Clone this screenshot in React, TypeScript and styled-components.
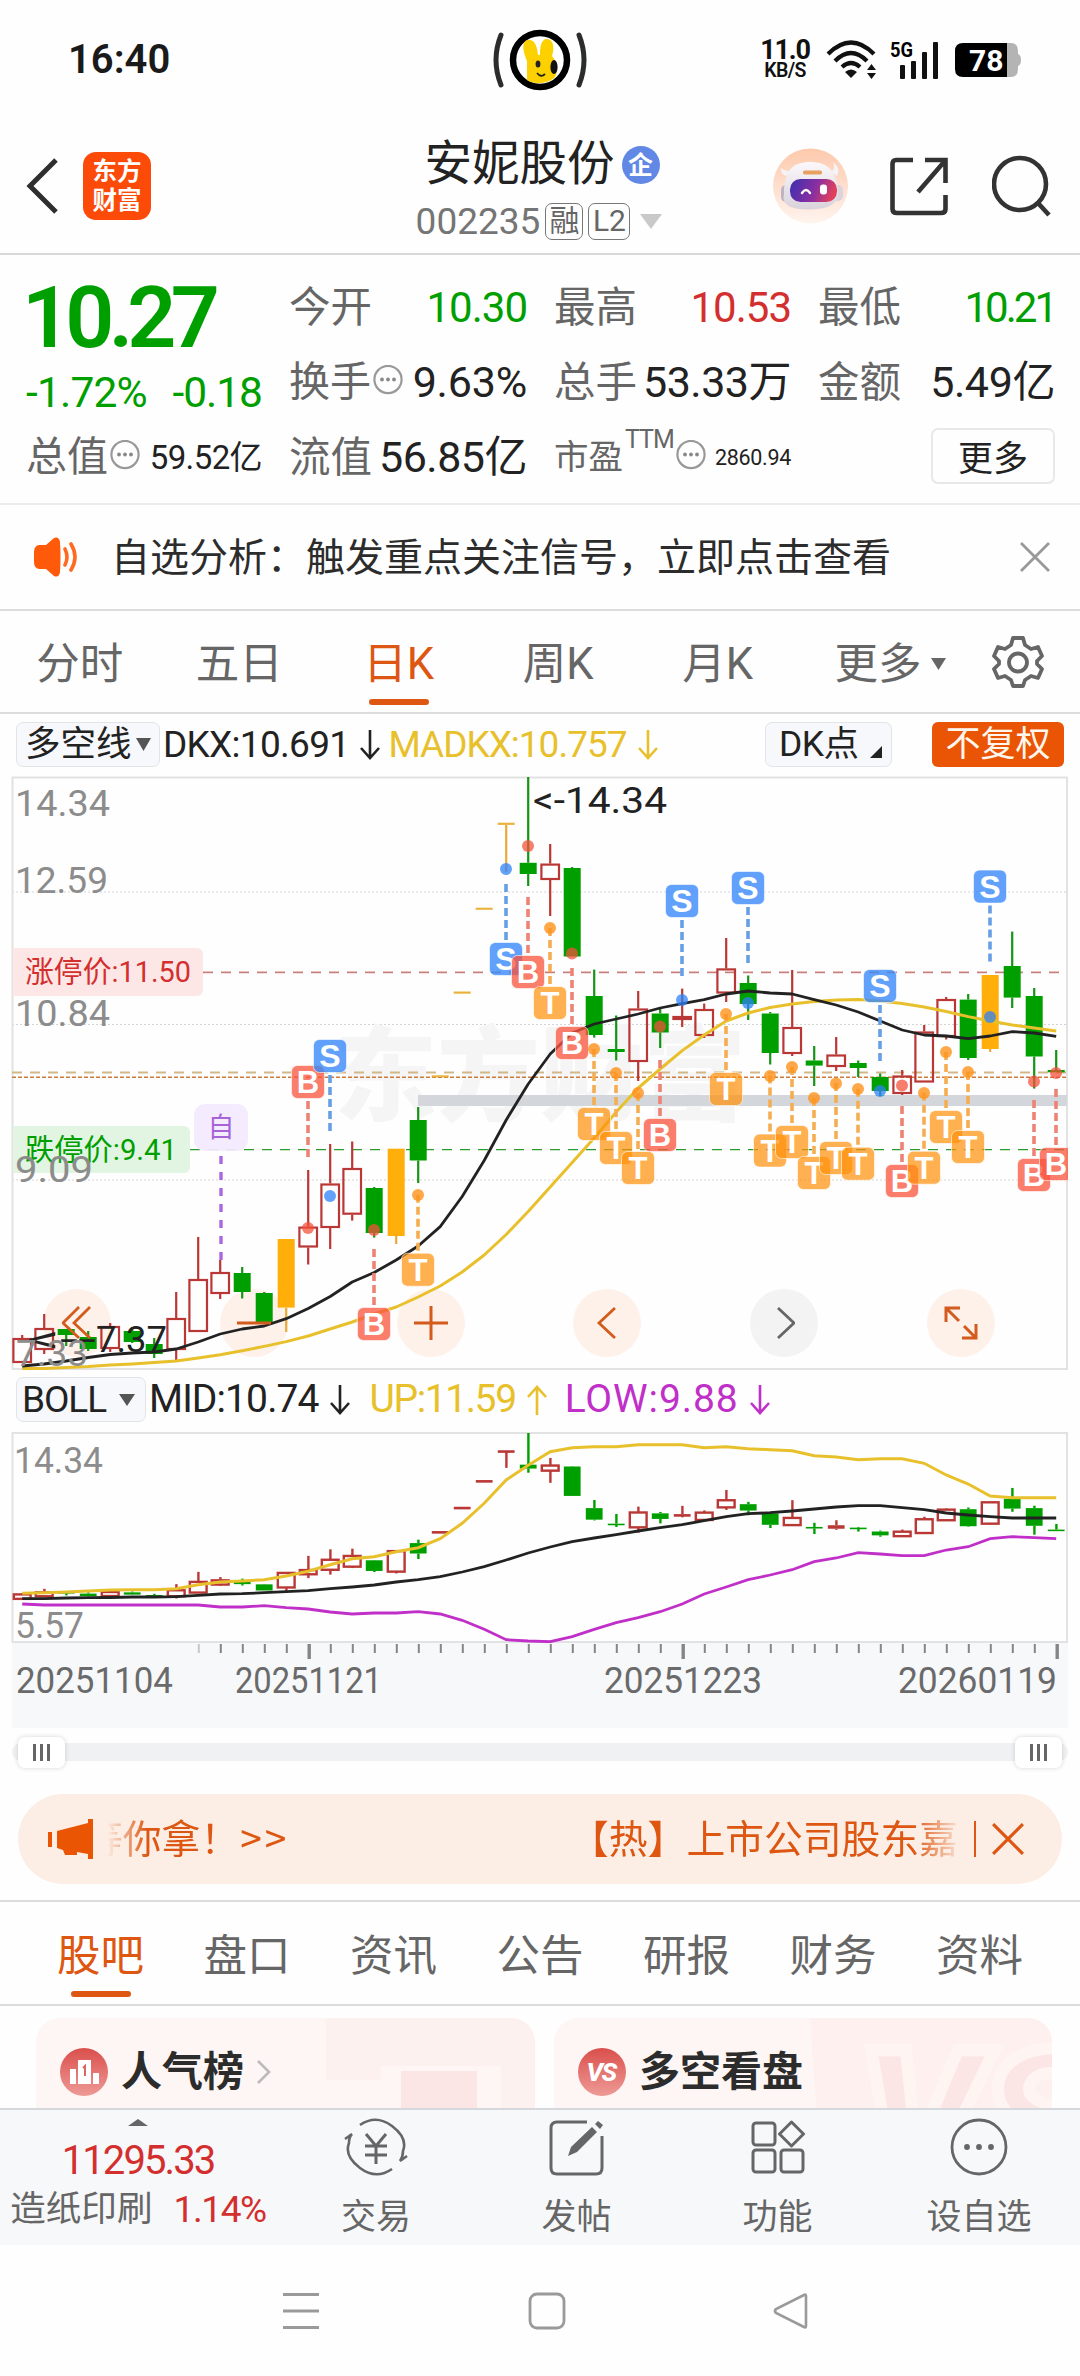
import React from "react";
import styled, { createGlobalStyle, css } from "styled-components";

const FONT = `Roboto, "Noto Sans CJK SC", "Noto Sans", sans-serif`;
const INK = "#222222";
const GREY = "#666666";
const GREEN = "#009f00";
const RED = "#d32f2f";
const ORANGE = "#dd5712";
const GOLD = "#e8c02c";
const PURPLE = "#c030c8";

const GlobalStyle = createGlobalStyle`
  html, body { margin: 0; padding: 0; background: #fefefe; }
  * { box-sizing: border-box; }
  svg { display: block; flex: none; }
`;

const Screen = styled.div`
  width: 1080px;
  height: 2376px;
  overflow: hidden;
  display: flex;
  flex-direction: column;
  background: #fefefe;
  color: ${INK};
  font-family: ${FONT};
  line-height: 1;
  white-space: nowrap;
`;

const Text = styled.span<{ $size: number; $color?: string; $ls?: number; $weight?: number; $up?: number }>`
  font-size: ${(p) => p.$size}px;
  color: ${(p) => p.$color ?? "inherit"};
  letter-spacing: ${(p) => p.$ls ?? 0}px;
  font-weight: ${(p) => p.$weight ?? 400};
  ${(p) => p.$up !== undefined && css`padding-bottom: ${p.$up}px;`}
  line-height: 1;
`;

/* ---------- status bar ---------- */
const StatusBar = styled.header`
  height: 119px;
  padding: 0 59px;
  display: grid;
  grid-template-columns: 1fr auto 1fr;
  align-items: center;
`;
const Clock = styled.span`
  padding-left: 9px;
  font-size: 40px;
  font-weight: 600;
  color: #1a1a1a;
`;
const StatusRight = styled.div`
  display: flex;
  justify-content: flex-end;
  align-items: center;
`;
const NetSpeed = styled.div`
  display: flex;
  flex-direction: column;
  align-items: center;
  width: 50px;
  margin-right: 16px;
  span {
    line-height: 0.87;
  }
`;

/* ---------- title bar ---------- */
const TitleBar = styled.nav`
  height: 136px;
  padding: 0 28px 0 26px;
  display: grid;
  grid-template-columns: 1fr auto 1fr;
  border-bottom: 2px solid #d9d9d9;
`;
const NavSide = styled.div<{ $end?: boolean }>`
  display: flex;
  align-items: center;
  justify-content: ${(p) => (p.$end ? "flex-end" : "flex-start")};
`;
const BrandLogo = styled.div`
  width: 68px;
  height: 68px;
  margin-left: 25px;
  border-radius: 13px;
  background: #fc4a08;
  color: #fff;
  font-size: 24.5px;
  line-height: 29px;
  font-weight: 700;
  display: flex;
  flex-direction: column;
  align-items: center;
  justify-content: center;
`;
const TitleBlock = styled.div`
  display: flex;
  flex-direction: column;
  align-items: center;
  padding-top: 22px;
`;
const TitleLine = styled.div`
  display: flex;
  align-items: center;
  gap: 7px;
  height: 48px;
  padding-left: 6px;
`;
const CodeLine = styled.div`
  display: flex;
  align-items: center;
  height: 36px;
  margin-top: 14px;
`;
const EntBadge = styled.span`
  width: 38px;
  height: 38px;
  border-radius: 50%;
  background: #6288e6;
  color: #fff;
  font-size: 25px;
  font-weight: 700;
  display: flex;
  align-items: center;
  justify-content: center;
`;
const TagBox = styled.span<{ $w: number }>`
  width: ${(p) => p.$w}px;
  height: 37px;
  margin-left: 5px;
  border: 1.5px solid #777;
  border-radius: 7px;
  color: ${GREY};
  font-size: 30px;
  display: flex;
  align-items: center;
  justify-content: center;
`;

/* ---------- quote ---------- */
const Quote = styled.section`
  height: 250px;
  padding: 0 25px 0 26px;
  display: grid;
  grid-template-columns: 236px 238px 237px 237px;
  column-gap: 27px;
  border-bottom: 2px solid #ebebeb;
`;
const PriceColumn = styled.div`
  display: grid;
  grid-template-rows: 126px 25px 103px;
  align-items: center;
`;
const LastPrice = styled.span`
  margin-left: -4px;
  font-size: 86px;
  font-weight: 600;
  letter-spacing: -5.8px;
  color: ${GREEN};
`;
const StatColumn = styled.div`
  display: grid;
  grid-template-rows: 75px 75px 75px;
  padding-top: 15px;
  align-items: center;
`;
const Stat = styled.div`
  display: flex;
  align-items: center;
  justify-content: space-between;
`;
const StatLabel = styled.div`
  display: flex;
  align-items: center;
  gap: 2px;
`;
const MoreButton = styled.button`
  justify-self: end;
  width: 124px;
  height: 56px;
  margin-top: -4px;
  border: 2px solid #e6e8e9;
  border-radius: 7px;
  background: #fefefe;
  font-family: inherit;
  font-size: 35px;
  color: ${INK};
  padding: 0 0 6px;
`;

/* ---------- alert ---------- */
const AlertBar = styled.section`
  height: 106px;
  padding: 0 30px 0 33px;
  display: flex;
  align-items: center;
  border-bottom: 2px solid #dcdcdc;
`;
const AlertText = styled.p`
  margin: 0 auto 0 30px;
  padding-bottom: 5px;
  font-size: 39px;
  color: #2c2c2c;
  font-family: "Noto Sans CJK SC", sans-serif;
`;

/* ---------- tabs ---------- */
const PeriodTabs = styled.nav`
  height: 103px;
  display: grid;
  grid-template-columns: repeat(5, 159.5px) 185px 1fr;
  align-items: center;
  border-bottom: 2px solid #dcdcdc;
`;
const Tab = styled.div<{ $active?: boolean }>`
  height: 100%;
  display: flex;
  flex-direction: column;
  align-items: center;
  justify-content: flex-end;
  font-size: 43.5px;
  color: ${(p) => (p.$active ? ORANGE : GREY)};
  gap: 13px;
  padding-bottom: 7px;
  &::after {
    content: "";
    width: 60px;
    height: 6px;
    border-radius: 3px;
    background: ${(p) => (p.$active ? ORANGE : "transparent")};
  }
`;
const TabLabel = styled.span`
  display: flex;
  align-items: center;
  gap: 9px;
`;
const GearCell = styled.div`
  padding-left: 9px;
`;

/* ---------- indicator rows ---------- */
const IndicatorRow = styled.div<{ $h: number }>`
  height: ${(p) => p.$h}px;
  padding: 0 16px 2px;
  display: flex;
  align-items: center;
`;
const Picker = styled.div<{ $w: number; $gap: number; $pl: number }>`
  width: ${(p) => p.$w}px;
  height: 45px;
  padding-left: ${(p) => p.$pl}px;
  display: flex;
  align-items: center;
  gap: ${(p) => p.$gap}px;
  border: 1.5px solid #e3e4e8;
  border-radius: 7px;
  background: #f7f8fb;
  color: ${INK};
`;
const Reading = styled.span<{ $color: string; $ml: number; $ls?: number; $size?: number }>`
  display: flex;
  align-items: center;
  gap: 11px;
  margin-left: ${(p) => p.$ml}px;
  color: ${(p) => p.$color};
  font-size: ${(p) => p.$size ?? 37}px;
  letter-spacing: ${(p) => p.$ls ?? 0}px;
`;
const RightTools = styled.div`
  display: flex;
  margin-left: auto;
`;
const AdjustButton = styled.div`
  width: 132px;
  height: 45px;
  margin-left: 40px;
  border-radius: 6px;
  background: #e95504;
  color: #fff6ee;
  font-size: 35px;
  display: flex;
  align-items: center;
  justify-content: center;
`;

/* ---------- chart ---------- */
const ChartArea = styled.section`
  position: relative;
  height: 592px;
`;
const ChartCanvas = styled.svg`
  position: relative;
  z-index: 1;
  overflow: visible;
`;
const ChartControls = styled.div`
  position: absolute;
  left: 43px;
  top: 512px;
  display: flex;
  gap: 108.8px;
`;
/* The disc sits below the candles, its glyph above them. */
const RoundButton = styled.div<{ $muted?: boolean }>`
  position: relative;
  width: 68px;
  height: 68px;
  display: flex;
  align-items: center;
  justify-content: center;
  color: ${(p) => (p.$muted ? "#666" : "#d35b1c")};
  &::before {
    content: "";
    position: absolute;
    inset: 0;
    z-index: 0;
    border-radius: 50%;
    background: ${(p) => (p.$muted ? "#f3f3f3" : "#fef1ea")};
  }
  svg {
    position: relative;
    z-index: 2;
  }
`;

/* ---------- range slider ---------- */
const SliderRow = styled.div`
  height: 66px;
  padding: 0 12px;
  display: flex;
  align-items: center;
  margin-top: -9px;
`;
const Track = styled.div`
  width: 1056px;
  height: 18px;
  padding: 0 6px;
  border-radius: 9px;
  background: #f0f1f3;
  display: flex;
  align-items: center;
  justify-content: space-between;
`;
const Handle = styled.div`
  width: 47px;
  height: 31px;
  border-radius: 7px;
  background: #fff;
  box-shadow: 0 0 5px rgba(0, 0, 0, 0.16);
  display: flex;
  align-items: center;
  justify-content: center;
  gap: 4.5px;
  i {
    width: 2.5px;
    height: 17px;
    background: #666;
  }
`;

/* ---------- banner ---------- */
const Banner = styled.div`
  height: 90px;
  margin: 9px 18px 0;
  padding: 0 0 0 30px;
  border-radius: 45px;
  background: #fceee5;
  display: flex;
  align-items: center;
  color: ${ORANGE};
`;
const Marquee = styled.div`
  width: 850px;
  margin-left: 13px;
  overflow: hidden;
  display: flex;
  font-family: "Noto Sans CJK SC", sans-serif;
  font-size: 38.8px;
  line-height: 50px;
  padding-bottom: 6px;
  mask-image: linear-gradient(90deg, transparent 0, #000 40px, #000 806px, transparent 856px);
`;
const MarqueeOld = styled.span`
  margin-left: -23px;
`;
const MarqueeArrows = styled.span`
  margin-left: 1px;
  letter-spacing: 3px;
`;
const MarqueeNew = styled.span`
  margin-left: auto;
  margin-right: -1px;
`;
const Divider = styled.i`
  width: 2px;
  height: 36px;
  margin: 0 16px 0 17px;
  background: ${ORANGE};
`;

/* ---------- content tabs and cards ---------- */
const ContentTabs = styled.nav`
  height: 106px;
  margin-top: 16px;
  padding: 0 57px;
  display: flex;
  justify-content: space-between;
  border-top: 2px solid #dcdcdc;
  border-bottom: 2px solid #dcdcdc;
`;
const Cards = styled.section`
  height: 102px;
  padding: 12px 28px 0 36px;
  display: grid;
  grid-template-columns: 499px 498px;
  column-gap: 19px;
  overflow: hidden;
`;
const Card = styled.div`
  position: relative;
  height: 140px;
  border-radius: 24px;
  overflow: hidden;
  background: #fef6f4;
`;
const CardArt = styled.svg`
  position: absolute;
  inset: 0;
`;
const CardTitle = styled.div`
  position: relative;
  display: flex;
  align-items: center;
  height: 108px;
  padding-left: 24px;
  gap: 13px;
`;

/* ---------- bottom bars ---------- */
const ActionBar = styled.footer`
  height: 137px;
  border-top: 2px solid #d5d9dd;
  background: #f7f8fa;
  display: grid;
  grid-template-columns: 276px 200px 201px 201px 202px;
`;
const IndexCell = styled.div`
  display: flex;
  flex-direction: column;
  align-items: center;
  padding-top: 9px;
`;
const IndexValue = styled.span`
  margin-top: 15px;
  font-size: 40px;
  letter-spacing: -1.9px;
  color: ${RED};
`;
const IndexRow = styled.div`
  display: flex;
  align-items: center;
  gap: 21px;
  margin-top: 10px;
`;
const Action = styled.div`
  display: flex;
  flex-direction: column;
  align-items: center;
  padding-top: 8px;
  gap: 24px;
  font-size: 35px;
  color: ${GREY};
`;
const SystemNav = styled.div`
  height: 131px;
  padding: 0 270px 0 280px;
  display: flex;
  align-items: center;
  justify-content: space-between;
`;

/* ---------- data: [kind, bodyTop, bodyBottom, high, low] on the main pane ---------- */
type Kind = "r" | "g" | "y";
type Candle = [Kind, number, number, number, number];
const candles: Candle[] = [
  ["r", 1338, 1363, 1335, 1363], ["r", 1328, 1350, 1314, 1354], ["g", 1329, 1335, 1329, 1346],
  ["g", 1337, 1349, 1331, 1351], ["r", 1326, 1349, 1323, 1352], ["g", 1331, 1342, 1327, 1343],
  ["g", 1344, 1354, 1338, 1358], ["r", 1318, 1350, 1292, 1361], ["r", 1279, 1332, 1237, 1332],
  ["r", 1272, 1294, 1260, 1299], ["g", 1273, 1292, 1267, 1298.5], ["g", 1293, 1322, 1292, 1322],
  ["y", 1239, 1307.6, 1239, 1332], ["r", 1226.6, 1247.5, 1170, 1264.5], ["r", 1183.5, 1228, 1144, 1249],
  ["r", 1168, 1214.7, 1141.5, 1220.6], ["g", 1188, 1233, 1187, 1237.6], ["y", 1148.7, 1236, 1148.7, 1244],
  ["g", 1120, 1160.5, 1107, 1183], ["y", 1075.3, 1077.3, 1076, 1076], ["y", 991.5, 993.7, 992, 992],
  ["y", 907.7, 909.8, 909, 909], ["y", 822.7, 824.9, 823, 872], ["g", 862.8, 874, 777, 886],
  ["r", 863.6, 880, 844, 916], ["g", 868, 956.5, 867, 956], ["g", 996, 1035, 969.6, 1037.6],
  ["g", 1049, 1052, 1015.5, 1060.5], ["r", 1008.5, 1062, 991, 1081], ["g", 1013.5, 1032.5, 1008.7, 1048],
  ["r", 1016, 1020, 988.6, 1027], ["r", 1009, 1036, 1003.6, 1038], ["r", 968.4, 993.5, 938, 1002],
  ["g", 983, 1004, 975.5, 1020], ["g", 1013.5, 1053, 1012, 1064.5], ["r", 1027, 1054, 970, 1056],
  ["g", 1060.5, 1065.6, 1046, 1086], ["r", 1054.5, 1067, 1037, 1071], ["g", 1063, 1068, 1060.5, 1077],
  ["g", 1077, 1091, 1073.5, 1096], ["r", 1075.5, 1094, 1070, 1095], ["r", 1031.5, 1082.5, 1025, 1082],
  ["r", 999, 1037, 997, 1039.5], ["g", 999.6, 1058, 994, 1060], ["y", 975, 1049, 975, 1052],
  ["g", 966, 997.6, 931.6, 1008], ["g", 996, 1056.5, 988, 1088.6], ["g", 1070, 1072.3, 1050, 1072],
];
const X = (i: number) => 22.2 + i * 22;

const dkx = [1366, 1364, 1361, 1357.5, 1354.5, 1353, 1352, 1349, 1342, 1334, 1329, 1326, 1318.7, 1308.5, 1296.5, 1282, 1272.5, 1260,
  1246, 1226.6, 1196.5, 1160.5, 1120, 1084, 1054, 1033, 1024, 1019, 1014, 1008, 1003.6, 999.6, 994, 991, 993, 994, 999.6, 1005,
  1012, 1021, 1030, 1035, 1036, 1038.7, 1036, 1031.6, 1033, 1036.4];
const madkx = [1368.5, 1368.5, 1367.5, 1366.5, 1365, 1364, 1362.6, 1361, 1358, 1354.7, 1350.7, 1346.4, 1341.6, 1336, 1329, 1322, 1314, 1307,
  1297, 1286, 1272, 1255, 1234.5, 1211.5, 1187, 1162.5, 1138, 1112, 1088, 1069, 1050.6, 1035, 1021, 1013, 1007.5, 1004, 1001.6, 1000,
  999.6, 1001, 1003.6, 1007, 1011.5, 1016.6, 1021, 1025, 1028, 1031];
const up = [1593.3, 1592.7, 1592, 1591, 1590, 1589.7, 1589.7, 1588.7, 1584.7, 1582, 1581, 1579.7, 1576, 1571.3, 1564.7, 1558.7, 1556.7, 1551.7,
  1547.7, 1538.7, 1523.3, 1503.3, 1480, 1465.3, 1451.7, 1447.7, 1446.7, 1446.7, 1444.7, 1444.7, 1444.7, 1447.7, 1446.7, 1448.7, 1449.7, 1450.7,
  1455.7, 1457, 1459.7, 1458.7, 1458.7, 1463.3, 1475, 1484, 1496, 1497.7, 1497.7, 1497.7];
const mid = [1598.7, 1598.7, 1598, 1597.7, 1597.5, 1597, 1597, 1596.7, 1595.3, 1594, 1593.7, 1592.7, 1591.7, 1590.7, 1588.7, 1587, 1585, 1582,
  1579.7, 1576.7, 1572, 1566.7, 1560, 1553, 1547, 1541.7, 1538, 1534.7, 1531, 1527.7, 1524.7, 1520.7, 1516.7, 1513.7, 1512.7, 1511, 1509, 1507,
  1505.7, 1505.7, 1507.7, 1509.7, 1513, 1515, 1516.7, 1518, 1518, 1518];
const low = [1604, 1605, 1605, 1605, 1605, 1605, 1605, 1605, 1605, 1607, 1607, 1605.7, 1607.7, 1609, 1612, 1614, 1613, 1613, 1611.7, 1614,
  1620.3, 1629.3, 1639.7, 1641, 1641.7, 1636.7, 1629.3, 1622.7, 1617.7, 1611.7, 1604, 1594, 1587, 1579.7, 1575, 1569.7, 1561.7, 1558,
  1552.7, 1554, 1555.7, 1555.7, 1550, 1546.7, 1538.7, 1536.7, 1537.7, 1538.7];

const line = (ys: number[]) => ys.map((y, i) => `${X(i).toFixed(1)},${y}`).join(" ");

/* The main pane is logarithmic, the BOLL pane linear. */
const toBoll = (y: number) => {
  const price = 14.34 * Math.exp((-(y - 777) / 592) * 0.6711);
  return 1433 + ((14.34 - price) / 8.77) * 209;
};

type Mark = { i: number; t: "B" | "S" | "T"; y: number; dot: number; dir: 1 | -1 };
const marks: Mark[] = [
  { i: 13, t: "B", y: 1082, dot: 1228, dir: 1 }, { i: 14, t: "S", y: 1056, dot: 1196, dir: 1 },
  { i: 16, t: "B", y: 1324, dot: 1230, dir: -1 }, { i: 18, t: "T", y: 1269.7, dot: 1195, dir: -1 },
  { i: 22, t: "S", y: 959, dot: 869, dir: -1 }, { i: 23, t: "B", y: 972, dot: 846, dir: -1 },
  { i: 24, t: "T", y: 1003, dot: 928, dir: -1 }, { i: 25, t: "B", y: 1043, dot: 953.5, dir: -1 },
  { i: 26, t: "T", y: 1124, dot: 1049, dir: -1 }, { i: 27, t: "T", y: 1148, dot: 1073, dir: -1 },
  { i: 28, t: "T", y: 1168, dot: 1093, dir: -1 }, { i: 29, t: "B", y: 1135, dot: 1026.5, dir: -1 },
  { i: 30, t: "S", y: 901, dot: 1000, dir: 1 }, { i: 32, t: "T", y: 1089, dot: 1014, dir: -1 },
  { i: 33, t: "S", y: 888, dot: 1003, dir: 1 }, { i: 34, t: "T", y: 1150.6, dot: 1076, dir: -1 },
  { i: 35, t: "T", y: 1142, dot: 1067, dir: -1 }, { i: 36, t: "T", y: 1173, dot: 1098, dir: -1 },
  { i: 37, t: "T", y: 1158, dot: 1083.5, dir: -1 }, { i: 38, t: "T", y: 1163.7, dot: 1089, dir: -1 },
  { i: 39, t: "S", y: 986, dot: 1091, dir: 1 }, { i: 40, t: "B", y: 1181, dot: 1085.5, dir: -1 },
  { i: 41, t: "T", y: 1167.7, dot: 1093, dir: -1 }, { i: 42, t: "T", y: 1127, dot: 1052, dir: -1 },
  { i: 43, t: "T", y: 1147, dot: 1072, dir: -1 }, { i: 44, t: "S", y: 886.6, dot: 1017, dir: 1 },
  { i: 46, t: "B", y: 1175, dot: 1081.5, dir: -1 }, { i: 47, t: "B", y: 1164, dot: 1073, dir: -1 },
];
const boxFill = { B: "rgba(250,84,62,.76)", S: "rgba(58,137,250,.8)", T: "rgba(255,146,12,.72)" };
const dotFill = { B: "rgba(244,80,58,.74)", S: "rgba(44,130,250,.74)", T: "rgba(255,146,28,.8)" };
const stemFill = { B: "#ee8274", S: "#679fe6", T: "#f5ad52" };

const MainCandle = ({ c, i }: { c: Candle; i: number }) => {
  const [k, t, b, h, l] = c;
  const x = X(i);
  const color = k === "r" ? "#b93836" : k === "g" ? GREEN : "#ffae0a";
  const wick = k === "y" ? "#e9a93a" : k === "g" ? "#159415" : color;
  return (
    <g>
      {h < t && <rect x={x - 1.1} y={h} width={2.2} height={t - h} fill={wick} />}
      {l > b && <rect x={x - 1.1} y={b} width={2.2} height={l - b} fill={wick} />}
      {k === "r" ? (
        <rect x={x - 8.8} y={t + 1} width={17.6} height={b - t - 2} fill="none" stroke={color} strokeWidth={2.2} />
      ) : (
        <rect x={x - 8.5} y={t} width={17} height={b - t} fill={b - t < 3 && k === "y" ? "#e9b23c" : color} />
      )}
    </g>
  );
};

const BollCandle = ({ c, i }: { c: Candle; i: number }) => {
  const [t, b, h, l] = c.slice(1).map((v) => toBoll(v as number));
  const x = X(i);
  const green = c[0] === "g";
  const color = green ? GREEN : "#b93836";
  const hollow = !green && b - t > 4;
  const bh = Math.max(b - t, green ? 1.6 : 2.6);
  return (
    <g>
      <rect x={x - 1} y={h} width={2.4} height={Math.max(t - h, 0)} fill={color} />
      <rect x={x - 1} y={b} width={2.4} height={Math.max(l - b, 0)} fill={color} />
      {hollow ? (
        <rect x={x - 8.4} y={t + 0.6} width={16.8} height={b - t - 0.6} fill="none" stroke={color} strokeWidth={2.4} />
      ) : (
        <rect x={x - 8.4} y={t} width={16.8} height={bh} fill={color} />
      )}
    </g>
  );
};

const Marker = ({ m }: { m: Mark }) => {
  const x = X(m.i) - 0.2;
  const near = m.y + m.dir * 19;
  const far = m.y + m.dir * 75;
  return (
    <g>
      <line x1={x} x2={x} y1={Math.min(near, far)} y2={Math.max(near, far)} stroke={stemFill[m.t]} strokeWidth={3.6} strokeDasharray="8 4" />
      <circle cx={x} cy={m.dot} r={6} fill={dotFill[m.t]} />
      <rect x={x - 16.5} y={m.y - 16.5} width={33} height={33} rx={6} fill={boxFill[m.t]} stroke="rgba(255,255,255,.6)" strokeWidth={1} />
      <text x={x} y={m.y + 11.3} textAnchor="middle" fontFamily="Liberation Sans, sans-serif" fontWeight={700} fontSize={m.t === "S" ? 32 : 31} fill="#fff">
        {m.t}
      </text>
    </g>
  );
};

const AxisText = ({ x, y, w, c = "#8c8c8c", s = 37.5, children }: { x: number; y: number; w: number; c?: string; s?: number; children: string }) => (
  <text x={x} y={y} fontSize={s} fill={c} textLength={w} lengthAdjust="spacingAndGlyphs" fontFamily="Roboto, sans-serif">
    {children}
  </text>
);

const MainChart = () => (
  <ChartCanvas width={1080} height={592} viewBox="0 777 1080 592" fontFamily={FONT}>
    {[892, 1024.5, 1180].map((y) => (
      <line key={y} x1={12} x2={1067} y1={y} y2={y} stroke="#d4d4d4" strokeWidth={1} strokeDasharray="2 2" />
    ))}
    <text x={334} y={1113} fontSize={103} fontWeight={900} fill="#f5f5f5" fontFamily="Noto Sans CJK SC, sans-serif">东方财富</text>
    <rect x={12.5} y={777.5} width={1054.5} height={591.5} fill="none" stroke="#e2e2e2" strokeWidth={2} />
    <rect x={418} y={1095} width={649} height={11} fill="#d3d7dc" />
    <line x1={203} x2={1067} y1={972.4} y2={972.4} stroke="#c9807c" strokeWidth={1.8} strokeDasharray="10 8" />
    <line x1={12} x2={1067} y1={1072.5} y2={1072.5} stroke="#d2b888" strokeWidth={1.8} strokeDasharray="10 8" />
    <line x1={12} x2={1067} y1={1077.3} y2={1077.3} stroke="#cc7a3c" strokeWidth={1.4} strokeDasharray="4 2" />
    <line x1={190} x2={1067} y1={1149.6} y2={1149.6} stroke="#2f9a2f" strokeWidth={1.4} strokeDasharray="10 8" />
    <path d="M13 948h184a6 6 0 0 1 6 6v36a6 6 0 0 1-6 6H13z" fill="#fde7e6" />
    <path d="M13 1126h171a6 6 0 0 1 6 6v35a6 6 0 0 1-6 6H13z" fill="#e2f4e2" />
    <text x={25} y={982} fontSize={30} fill={RED} textLength={166} lengthAdjust="spacingAndGlyphs">涨停价:11.50</text>
    <text x={25} y={1160} fontSize={30} fill={GREEN} textLength={152} lengthAdjust="spacingAndGlyphs">跌停价:9.41</text>
    {candles.map((c, i) => <MainCandle key={i} c={c} i={i} />)}
    <polyline points={line(madkx)} fill="none" stroke={GOLD} strokeWidth={3} strokeLinejoin="round" />
    <polyline points={line(dkx)} fill="none" stroke={INK} strokeWidth={2.8} strokeLinejoin="round" />
    <line x1={221} x2={221} y1={1156} y2={1261} stroke="#ab68dd" strokeWidth={3.4} strokeDasharray="8 8" />
    <rect x={194} y={1104} width={54} height={47} rx={11} fill="rgba(243,234,254,.92)" />
    <text x={221} y={1137} textAnchor="middle" fontSize={27} fill="#a764d8">自</text>
    <AxisText x={15} y={816} w={95}>14.34</AxisText>
    <AxisText x={15} y={892.5} w={93}>12.59</AxisText>
    <AxisText x={15} y={1025.5} w={95}>10.84</AxisText>
    <AxisText x={15} y={1181.5} w={78}>9.09</AxisText>
    <clipPath id="pane"><rect x={12} y={777} width={1056} height={592} /></clipPath>
    <g clipPath="url(#pane)">{marks.map((m) => <Marker key={m.i} m={m} />)}</g>
    <AxisText x={533} y={813} w={134} c={INK}>{"<-14.34"}</AxisText>
    <AxisText x={27} y={1352} w={69} c={INK}>{"<--"}</AxisText>
    <AxisText x={96} y={1352} w={71} c={INK}>7.37</AxisText>
    <AxisText x={16} y={1366} w={72}>7.33</AxisText>
  </ChartCanvas>
);

const BollChart = () => (
  <svg width={1080} height={296} viewBox="0 1432 1080 296">
    <rect x={12} y={1643} width={1056} height={85} fill="#f7f8fa" />
    <rect x={12.5} y={1433} width={1054.5} height={209} fill="none" stroke="#e2e2e2" strokeWidth={2} />
    <AxisText x={14} y={1473} w={89} s={37}>14.34</AxisText>
    <AxisText x={15} y={1638} w={69} s={37}>5.57</AxisText>
    <clipPath id="boll"><rect x={12} y={1433} width={1056} height={210} /></clipPath>
    <g clipPath="url(#boll)">
      {candles.map((c, i) => <BollCandle key={i} c={c} i={i} />)}
      <polyline points={line(mid)} fill="none" stroke={INK} strokeWidth={2.8} />
      <polyline points={line(up)} fill="none" stroke={GOLD} strokeWidth={3} />
      <polyline points={line(low)} fill="none" stroke={PURPLE} strokeWidth={2.8} />
    </g>
    {candles.map((_, i) => {
      if (i < 8) return null;
      const big = i === 13 || i === 30 || i === 47;
      return <rect key={i} x={X(i) - (big ? 0.7 : 0.4)} y={1644} width={big ? 3.4 : 2} height={big ? 15 : 9} fill={i === 8 ? "#c8c8c8" : "#858585"} />;
    })}
    <AxisText x={16} y={1692.5} w={157} c="#6a6a6a">20251104</AxisText>
    <AxisText x={235} y={1692.5} w={147} c="#6a6a6a">20251121</AxisText>
    <AxisText x={604} y={1692.5} w={158} c="#6a6a6a">20251223</AxisText>
    <AxisText x={898} y={1692.5} w={159} c="#6a6a6a">20260119</AxisText>
  </svg>
);

/* ---------- small drawings ---------- */
const Caret = ({ w, h, c, up: flip }: { w: number; h: number; c: string; up?: boolean }) => (
  <svg width={w} height={h} viewBox="0 0 10 10" preserveAspectRatio="none"><path d={flip ? "M0 10L5 0l5 10z" : "M0 0h10L5 10z"} fill={c} /></svg>
);
const Arrow = ({ up: flip }: { up?: boolean }) => (
  <svg width={20} height={32} viewBox="0 0 20 32" fill="none" stroke="currentColor" strokeWidth={2.6}>
    <path d={flip ? "M10 31V3M1 13l9-10 9 10" : "M10 1v28M1 19l9 10 9-10"} />
  </svg>
);
const InfoDots = () => (
  <svg width={30} height={36} viewBox="0 0 30 36">
    <circle cx={15} cy={14.5} r={13.6} fill="none" stroke="#999" strokeWidth={2.2} />
    <circle cx={9} cy={14.5} r={1.9} fill="#888" /><circle cx={15} cy={14.5} r={1.9} fill="#888" /><circle cx={21} cy={14.5} r={1.9} fill="#888" />
  </svg>
);
const Cross = ({ s, c, w }: { s: number; c: string; w: number }) => (
  <svg width={s} height={s} viewBox="0 0 30 30"><path d="M1 1l28 28M29 1L1 29" stroke={c} strokeWidth={w} /></svg>
);

const Rabbit = () => (
  <svg width={94} height={62} viewBox="0 0 94 62">
    <path d="M8 6Q-2 31 8 56M86 6Q96 31 86 56" fill="none" stroke="#2a2c2e" strokeWidth={5} strokeLinecap="round" />
    <circle cx={47} cy={31} r={27} fill="#fff" stroke="#000" strokeWidth={6.5} />
    <path d="M34 51V32C30 22 28 12 35 11s9 6 10 15h2c0-8 1-16 7-16s8 8 5 17q5 6 5 13c0 7-3 10-8 12-7 3-16 3-22-1z" fill="#fdd000" />
    <ellipse cx={45} cy={35} rx={2.4} ry={3.6} fill="#222" /><ellipse cx={61} cy={38} rx={3.6} ry={7} fill="#111" />
    <path d="M44 44q4 5 8 1" fill="none" stroke="#222" strokeWidth={1.8} />
  </svg>
);

const Wifi = () => (
  <svg width={52} height={40} viewBox="0 0 52 40" fill="none" stroke="#111" strokeWidth={4.2}>
    <path d="M2 14Q25-9 48 14M9 21Q25 5 41 21M16 27Q25 19 34 27" />
    <path d="M25 38l-6-6q6-5 12 0z" fill="#111" stroke="none" />
    <path d="M41 30l4.500-6 4.500 6zM41 33l4.500 6 4.500-6z" fill="#111" stroke="none" />
  </svg>
);

const Signal = () => (
  <svg width={50} height={38} viewBox="0 0 50 38">
    <text x={0} y={16} fontSize={20} fontWeight={700} fontFamily="Roboto, sans-serif" textLength={23} lengthAdjust="spacingAndGlyphs">5G</text>
    <g fill="#111"><rect x={10} y={24} width={5} height={14} rx={1} /><rect x={21} y={20} width={5} height={18} rx={1} /><rect x={32} y={11} width={5} height={27} rx={1} /><rect x={43} y={1} width={5} height={37} rx={1} /></g>
  </svg>
);

const Battery = () => (
  <svg width={66} height={34} viewBox="0 0 66 34">
    <path d="M50 0h6q7 0 7 8v18q0 8-7 8h-6zM63 11q3 1 3 6t-3 6z" fill="#b4b4b4" />
    <path d="M8 0h44v34H8q-8 0-8-8V8q0-8 8-8z" fill="#000" />
    <text x={14} y={27.5} fontSize={30} fontWeight={700} fill="#fff" fontFamily="Roboto, sans-serif">78</text>
  </svg>
);

const Robot = () => (
  <svg width={75} height={76} viewBox="0 0 75 76">
    <defs>
      <linearGradient id="peach" x1="0" y1="0" x2="0" y2="1"><stop offset="0" stopColor="#fdc9ac" /><stop offset="1" stopColor="#fff4ee" /></linearGradient>
      <linearGradient id="visor" x1="0" y1="0" x2="1" y2=".2"><stop offset="0" stopColor="#3b2fb0" /><stop offset=".6" stopColor="#8a2fa0" /><stop offset="1" stopColor="#e0405e" /></linearGradient>
      <linearGradient id="shell" x1="0" y1="0" x2="0" y2="1"><stop offset="0" stopColor="#fbf8fa" /><stop offset="1" stopColor="#d9d2dc" /></linearGradient>
    </defs>
    <circle cx={37.5} cy={38} r={37.5} fill="url(#peach)" />
    <path d="M13 28q-6-3-5-8 4 4 9 3zM58 24q5-3 2-10 8 6 4 14z" fill="#f6f3f6" />
    <rect x={8} y={37} width={12} height={17} rx={5} fill="#bdb4c2" /><rect x={59} y={37} width={11} height={16} rx={5} fill="#dcd3dc" />
    <path d="M11 46C11 22 20 14 37 14s27 8 28 29q2 18-28 18.500T11 46z" fill="url(#shell)" />
    <rect x={30} y={22.5} width={19} height={4} rx={1.7} fill="#e7a060" />
    <rect x={17} y={31} width={47} height={23} rx={10.500} fill="url(#visor)" />
    <path d="M29 45q4-6 8 0" fill="none" stroke="#fff" strokeWidth={2.4} strokeLinecap="round" /><rect x={47} y={36.5} width={7} height={10} rx={3} fill="#fff" />
  </svg>
);

const periodTabs = ["分时", "五日", "日K", "周K", "月K"];
const contentTabs = ["股吧", "盘口", "资讯", "公告", "研报", "财务", "资料"];

export default function App() {
  return (
    <Screen>
      <GlobalStyle />
      <StatusBar>
        <Clock>16:40</Clock>
        <Rabbit />
        <StatusRight>
          <NetSpeed>
            <Text $size={27} $weight={700} $color="#111" $ls={-1.2}>11.0</Text>
            <Text $size={19.5} $weight={600} $color="#111" $ls={-0.6}>KB/S</Text>
          </NetSpeed>
          <Wifi />
          <svg width={12} height={1} />
          <Signal />
          <svg width={15} height={1} />
          <Battery />
        </StatusRight>
      </StatusBar>

      <TitleBar>
        <NavSide>
          <svg width={32} height={56} viewBox="0 0 32 56"><path d="M30 2L4 28l26 26" fill="none" stroke="#2e2e2e" strokeWidth={5} /></svg>
          <BrandLogo><span>东方</span><span>财富</span></BrandLogo>
        </NavSide>
        <TitleBlock>
          <TitleLine><Text $size={47.5}>安妮股份</Text><EntBadge>企</EntBadge></TitleLine>
          <CodeLine>
            <Text $size={37} $color="#757575">002235</Text>
            <TagBox $w={38}>融</TagBox><TagBox $w={42}>L2</TagBox>
            <svg width={10} height={1} /><Caret w={22} h={15} c="#c9c9c9" />
          </CodeLine>
        </TitleBlock>
        <NavSide $end>
          <Robot />
          <svg width={42} height={1} />
          <svg width={58} height={60} viewBox="0 0 58 60" fill="none" stroke="#333" strokeWidth={4.6}>
            <path d="M23 4H6Q2.500 4 2.500 8V53Q2.500 57 7 57H51Q55.500 57 55.500 53V39" /><path d="M35 4H55.500V27M54 6L28 36" />
          </svg>
          <svg width={44} height={1} />
          <svg width={60} height={62} viewBox="0 0 60 62" fill="none" stroke="#333" strokeWidth={4.6}><circle cx={28} cy={29} r={26} /><path d="M46 48l11 12" /></svg>
        </NavSide>
      </TitleBar>

      <Quote>
        <PriceColumn>
          <LastPrice>10.27</LastPrice>
          <Stat><Text $size={42.5} $color={GREEN} $ls={-0.8}>-1.72%</Text><Text $size={42.5} $color={GREEN} $ls={-1}>-0.18</Text></Stat>
          <Stat><StatLabel><Text $size={41} $color={GREY}>总值</Text><InfoDots /></StatLabel><Text $size={33} $ls={-0.6}>59.52亿</Text></Stat>
        </PriceColumn>
        <StatColumn>
          <Stat><Text $size={41.5} $color={GREY}>今开</Text><Text $size={42} $color={GREEN} $ls={-1}>10.30</Text></Stat>
          <Stat><StatLabel><Text $size={41} $color={GREY}>换手</Text><InfoDots /></StatLabel><Text $size={43} $ls={-0.2}>9.63%</Text></Stat>
          <Stat><Text $size={41.5} $color={GREY}>流值</Text><Text $size={43} $ls={-0.5}>56.85亿</Text></Stat>
        </StatColumn>
        <StatColumn>
          <Stat><Text $size={41.5} $color={GREY}>最高</Text><Text $size={42} $color={RED} $ls={-1}>10.53</Text></Stat>
          <Stat><Text $size={41.5} $color={GREY}>总手</Text><Text $size={43} $ls={-0.5}>53.33万</Text></Stat>
          <Stat>
            <StatLabel><Text $size={34.5} $color={GREY}>市盈</Text><Text $size={25} $color={GREY} $up={36} $ls={-1}>TTM</Text><InfoDots /></StatLabel>
            <Text $size={21.5} $ls={-0.3}>2860.94</Text>
          </Stat>
        </StatColumn>
        <StatColumn>
          <Stat><Text $size={41.5} $color={GREY}>最低</Text><Text $size={42} $color={GREEN} $ls={-3}>10.21</Text></Stat>
          <Stat><Text $size={41.5} $color={GREY}>金额</Text><Text $size={43} $ls={-0.4}>5.49亿</Text></Stat>
          <MoreButton>更多</MoreButton>
        </StatColumn>
      </Quote>

      <AlertBar>
        <svg width={48} height={40} viewBox="0 0 48 40">
          <path d="M6 8h7l8-7q5-2 6 4 1 15 0 30-1 6-6 4l-8-7H6q-5-1-5-7v-10q0-6 5-7z" fill="#ff5a0a" />
          <path d="M32 12q4 8 0 16M38 7q8 13 0 26" fill="none" stroke="#ff6a20" strokeWidth={3.6} strokeLinecap="round" />
        </svg>
        <AlertText>自选分析：触发重点关注信号，立即点击查看</AlertText>
        <Cross s={30} c="#999" w={2.8} />
      </AlertBar>

      <PeriodTabs>
        {periodTabs.map((t) => <Tab key={t} $active={t === "日K"}>{t}</Tab>)}
        <Tab><TabLabel>更多<Caret w={15} h={12} c="#666" /></TabLabel></Tab>
        <GearCell>
          <svg width={52} height={54} viewBox="0 0 52 54" fill="none" stroke="#666" strokeWidth={3.8}>
            <path d="M21 3h10l2 7 6 4 7-2 4 9-5 5v3l5 5-4 9-7-2-6 4-2 6H21l-2-6-6-4-7 2-4-9 5-5v-3l-5-5 4-9 7 2 6-4z" strokeLinejoin="round" />
            <circle cx={26} cy={27.500} r={9} />
          </svg>
        </GearCell>
      </PeriodTabs>

      <IndicatorRow $h={63}>
        <Picker $w={144} $gap={4} $pl={8}><Text $size={35.5}>多空线</Text><Caret w={15} h={13} c="#555" /></Picker>
        <Reading $color={INK} $ml={3} $ls={-0.7}>DKX:10.691<Arrow /></Reading>
        <Reading $color={GOLD} $ml={8} $ls={-1}>MADKX:10.757<Arrow /></Reading>
        <RightTools>
          <Picker $w={127} $gap={11} $pl={13}><Text $size={35.5} $ls={-0.5}>DK点</Text><svg width={12} height={26} viewBox="0 0 12 26"><path d="M12 14v12H0z" fill="#222" /></svg></Picker>
          <AdjustButton>不复权</AdjustButton>
        </RightTools>
      </IndicatorRow>

      <ChartArea>
        <MainChart />
        <ChartControls>
          <RoundButton>
            <svg width={30} height={34} viewBox="0 0 30 34" fill="none" stroke="currentColor" strokeWidth={2.8}><path d="M17 1L1 17l16 15M28 1L12 17l16 15" /></svg>
          </RoundButton>
          <RoundButton><svg width={34} height={34} viewBox="0 0 34 34"><path d="M0 17h34" stroke="currentColor" strokeWidth={3} /></svg></RoundButton>
          <RoundButton><svg width={34} height={34} viewBox="0 0 34 34"><path d="M0 17h34M17 0v34" stroke="currentColor" strokeWidth={3} /></svg></RoundButton>
          <RoundButton><svg width={22} height={34} viewBox="0 0 22 34"><path d="M19 2L3 17l16 15" fill="none" stroke="currentColor" strokeWidth={2.8} /></svg></RoundButton>
          <RoundButton $muted><svg width={22} height={34} viewBox="0 0 22 34"><path d="M5 2l16 15L5 32" fill="none" stroke="currentColor" strokeWidth={2.8} /></svg></RoundButton>
          <RoundButton>
            <svg width={34} height={34} viewBox="0 0 34 34" fill="none" stroke="currentColor" strokeWidth={3}><path d="M16 2H2v14M2 2l13 13M18 32h14V18M32 32L20 20" /></svg>
          </RoundButton>
        </ChartControls>
      </ChartArea>

      <IndicatorRow $h={63}>
        <Picker $w={130} $gap={13} $pl={5}><Text $size={37} $ls={-1.1}>BOLL</Text><Caret w={16} h={12} c="#555" /></Picker>
        <Reading $size={39} $color={INK} $ml={3} $ls={-0.9}>MID:10.74<Arrow /></Reading>
        <Reading $size={39} $color={GOLD} $ml={20} $ls={-1.4}>UP:11.59<Arrow up /></Reading>
        <Reading $size={39} $color={PURPLE} $ml={18} $ls={0.9}>LOW:9.88<Arrow /></Reading>
      </IndicatorRow>
      <BollChart />

      <SliderRow>
        <Track><Handle><i /><i /><i /></Handle><Handle><i /><i /><i /></Handle></Track>
      </SliderRow>

      <Banner>
        <svg width={46} height={40} viewBox="0 0 46 40"><path d="M0 13h4v15H0zM9 12L40 4V0h5v40h-5v-5l-11-2v3H17l-2-5-6-2z" fill="#ea5504" /></svg>
        <Marquee>
          <MarqueeOld>等你拿！</MarqueeOld><MarqueeArrows>&gt;&gt;</MarqueeArrows>
          <MarqueeNew>【热】上市公司股东嘉</MarqueeNew>
        </Marquee>
        <Divider />
        <Cross s={32} c={ORANGE} w={3} />
      </Banner>

      <ContentTabs>
        {contentTabs.map((t) => <Tab key={t} $active={t === "股吧"}>{t}</Tab>)}
      </ContentTabs>

      <Cards>
        <Card>
          <CardArt width={499} height={140}>
            <path d="M290 0h209v140H465V48H345V62H290z" fill="#fdf1ef" />
            <path d="M245 62h100v-14h120v92H245z" fill="#fef6f4" /><rect x={365} y={53} width={76} height={60} fill="#fce6e5" />
          </CardArt>
          <CardTitle>
            <svg width={48} height={48} viewBox="0 0 48 48">
              <defs><linearGradient id="rank" x1="0" y1="0" x2="0" y2="1"><stop offset="0" stopColor="#da4f4c" /><stop offset="1" stopColor="#ee9a96" /></linearGradient></defs>
              <circle cx={24} cy={24} r={24} fill="url(#rank)" />
              <path d="M10 21h6v15h-6zM33 25h6v11h-6zM18 12h13v24H18z" fill="#fff" /><path d="M23 20l2-2v10" stroke="#dc6663" strokeWidth={2} fill="none" />
            </svg>
            <Text $size={41} $weight={700} $color="#2c2c2c">人气榜</Text>
            <svg width={14} height={24} viewBox="0 0 14 24"><path d="M1 1l11 11L1 23" fill="none" stroke="#bbb" strokeWidth={2.6} /></svg>
          </CardTitle>
        </Card>
        <Card>
          <CardArt width={498} height={140}>
            <path d="M256 0h242v140H266z" fill="#fdf0ee" />
            <text x={305} y={168} fontSize={190} fontWeight={900} fontStyle="italic" fontFamily="Roboto, sans-serif" fill="#fce6e5" stroke="#fef5f3" strokeWidth={12}>VS</text>
          </CardArt>
          <CardTitle>
            <svg width={48} height={48} viewBox="0 0 48 48">
              <circle cx={24} cy={24} r={24} fill="url(#rank)" />
              <text x={23} y={33} textAnchor="middle" fontSize={26} fontWeight={800} fontStyle="italic" fontFamily="Roboto, sans-serif" fill="#fff" letterSpacing={-1.5}>VS</text>
            </svg>
            <Text $size={41} $weight={700} $color="#2c2c2c">多空看盘</Text>
          </CardTitle>
        </Card>
      </Cards>

      <ActionBar>
        <IndexCell>
          <Caret w={20} h={7} c="#666" up />
          <IndexValue>11295.33</IndexValue>
          <IndexRow><Text $size={35.6} $color={GREY}>造纸印刷</Text><Text $size={37} $color={RED} $ls={-1.4}>1.14%</Text></IndexRow>
        </IndexCell>
        <Action>
          <svg width={66} height={58} viewBox="0 0 66 58" fill="none" stroke="#666" strokeWidth={2.6}>
            <path d="M17 7Q33-4 49 8T60 33q0 6-3 10l7-5M49 51Q33 62 17 50T6 25q0-6 3-9l-7 5" />
            <path d="M23 16l10 12 10-12M33 28v18M22 28h22M22 37h22" strokeWidth={3} />
          </svg>
          交易
        </Action>
        <Action>
          <svg width={56} height={58} viewBox="0 0 56 58" fill="none" stroke="#666" strokeWidth={3}>
            <path d="M38 4H8Q2 4 2 10V50Q2 56 8 56H47Q53 56 53 50V18" />
            <path d="M19 38l3-9L43 9l5 5-20 20zM46 6l3-3 5 4-3 4z" fill="#666" stroke="none" />
          </svg>
          发帖
        </Action>
        <Action>
          <svg width={54} height={58} viewBox="0 0 54 58" fill="none" stroke="#666" strokeWidth={3}>
            <rect x={2} y={5} width={22} height={22} rx={3} /><rect x={2} y={32} width={22} height={22} rx={3} /><rect x={30} y={32} width={22} height={22} rx={3} />
            <path d="M40.500 4l12 12-12 12-12-12z" strokeLinejoin="round" />
          </svg>
          功能
        </Action>
        <Action>
          <svg width={58} height={58} viewBox="0 0 58 58">
            <circle cx={29} cy={29} r={27} fill="none" stroke="#666" strokeWidth={2.8} />
            <circle cx={17} cy={29} r={2.9} fill="#666" /><circle cx={29} cy={29} r={2.9} fill="#666" /><circle cx={41} cy={29} r={2.9} fill="#666" />
          </svg>
          设自选
        </Action>
      </ActionBar>

      <SystemNav>
        <svg width={42} height={38} viewBox="0 0 42 38"><path d="M3 2.500h36M3 19h36M3 35.500h36" stroke="#9a9a9a" strokeWidth={3} /></svg>
        <svg width={38} height={38} viewBox="0 0 38 38"><rect x={2} y={2} width={34} height={34} rx={7} fill="none" stroke="#9a9a9a" strokeWidth={2.8} /></svg>
        <svg width={38} height={38} viewBox="0 0 38 38"><path d="M34 4v30q0 2-2 1L4 21q-2-2 0-4L32 3q2-1 2 1z" fill="none" stroke="#9a9a9a" strokeWidth={2.6} /></svg>
      </SystemNav>
    </Screen>
  );
}
